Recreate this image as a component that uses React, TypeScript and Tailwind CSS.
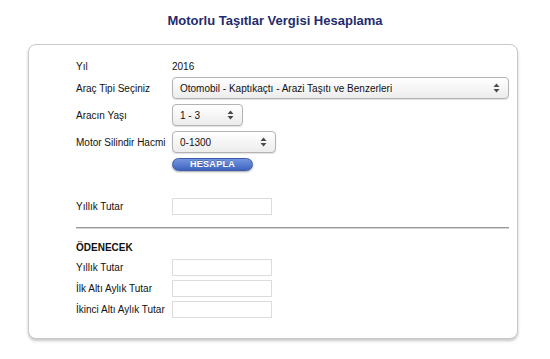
import React from 'react';

const font = { fontFamily: '"Liberation Sans", Arial, Helvetica, sans-serif' };

function Arrows() {
  return (
    <svg width="7" height="10" viewBox="0 0 7 10" className="shrink-0">
      <path d="M3.5 0.5 L6.5 4 L0.5 4 Z" fill="#4a4a4a" />
      <path d="M3.5 9.5 L6.5 6 L0.5 6 Z" fill="#4a4a4a" />
    </svg>
  );
}

function FakeSelect({ value, width }: { value: string; width: string }) {
  return (
    <div
      className={`${width} h-[22px] flex items-center justify-between pl-[7px] pr-[8px] rounded-[4px] border border-[#b3b3b3] bg-gradient-to-b from-[#ffffff] to-[#ececec] shadow-[0_1px_1px_rgba(0,0,0,0.12)] text-[10px] text-[#111]`}
    >
      <span className="truncate">{value}</span>
      <Arrows />
    </div>
  );
}

function Row({ label, children, className = '' }: { label: string; children?: React.ReactNode; className?: string }) {
  return (
    <div className={`flex items-center ${className}`}>
      <div className="w-[96px] shrink-0 text-[10px] text-[#111]">{label}</div>
      {children}
    </div>
  );
}

function Box() {
  return <div className="w-[100px] h-[17px] border border-[#dcdcdc] bg-white" />;
}

export default function App() {
  return (
    <div className="w-[550px] h-[359px] bg-white overflow-hidden" style={font}>
      <h1 className="pt-[13px] text-center text-[13px] font-bold text-[#1f2c6e] leading-[16px]">
        Motorlu Taşıtlar Vergisi Hesaplama
      </h1>

      <div className="mt-[15px] ml-[28px] w-[490px] h-[295px] rounded-[8px] border border-[#c9c9c9] bg-white shadow-[0_2px_3px_rgba(0,0,0,0.22)] pl-[47px] pr-[8px] pt-[13px]">
        <Row label="Yıl" className="h-[16px]">
          <span className="text-[10px] text-[#111]">2016</span>
        </Row>

        <Row label="Araç Tipi Seçiniz" className="mt-[3px]">
          <FakeSelect value="Otomobil - Kaptıkaçtı - Arazi Taşıtı ve Benzerleri" width="w-[337px]" />
        </Row>

        <Row label="Aracın Yaşı" className="mt-[5px]">
          <FakeSelect value="1 - 3" width="w-[71px]" />
        </Row>

        <Row label="Motor Silindir Hacmi" className="mt-[5px]">
          <FakeSelect value="0-1300" width="w-[104px]" />
        </Row>

        <div className="mt-[5px] ml-[96px] flex">
          <button className="w-[81px] h-[13px] flex items-center justify-center rounded-full border border-[#3c5cab] bg-gradient-to-b from-[#7496e0] to-[#3f64bf] text-white text-[9px] font-bold leading-none tracking-[0.3px] shadow-[0_1px_2px_rgba(0,0,0,0.35)] [text-shadow:0_-1px_0_rgba(0,0,0,0.25)]">
            HESAPLA
          </button>
        </div>

        <Row label="Yıllık Tutar" className="mt-[27px]">
          <Box />
        </Row>

        <div className="mt-[12px] h-[2px] border-t border-[#9a9a9a] border-b border-b-[#d4d4d4]" />

        <div className="mt-[11px] h-[14px] flex items-center text-[10px] font-bold text-[#111]">ÖDENECEK</div>

        <div className="mt-[5px] flex flex-col gap-[4px]">
          <Row label="Yıllık Tutar">
            <Box />
          </Row>
          <Row label="İlk Altı Aylık Tutar">
            <Box />
          </Row>
          <Row label="İkinci Altı Aylık Tutar">
            <Box />
          </Row>
        </div>
      </div>
    </div>
  );
}
